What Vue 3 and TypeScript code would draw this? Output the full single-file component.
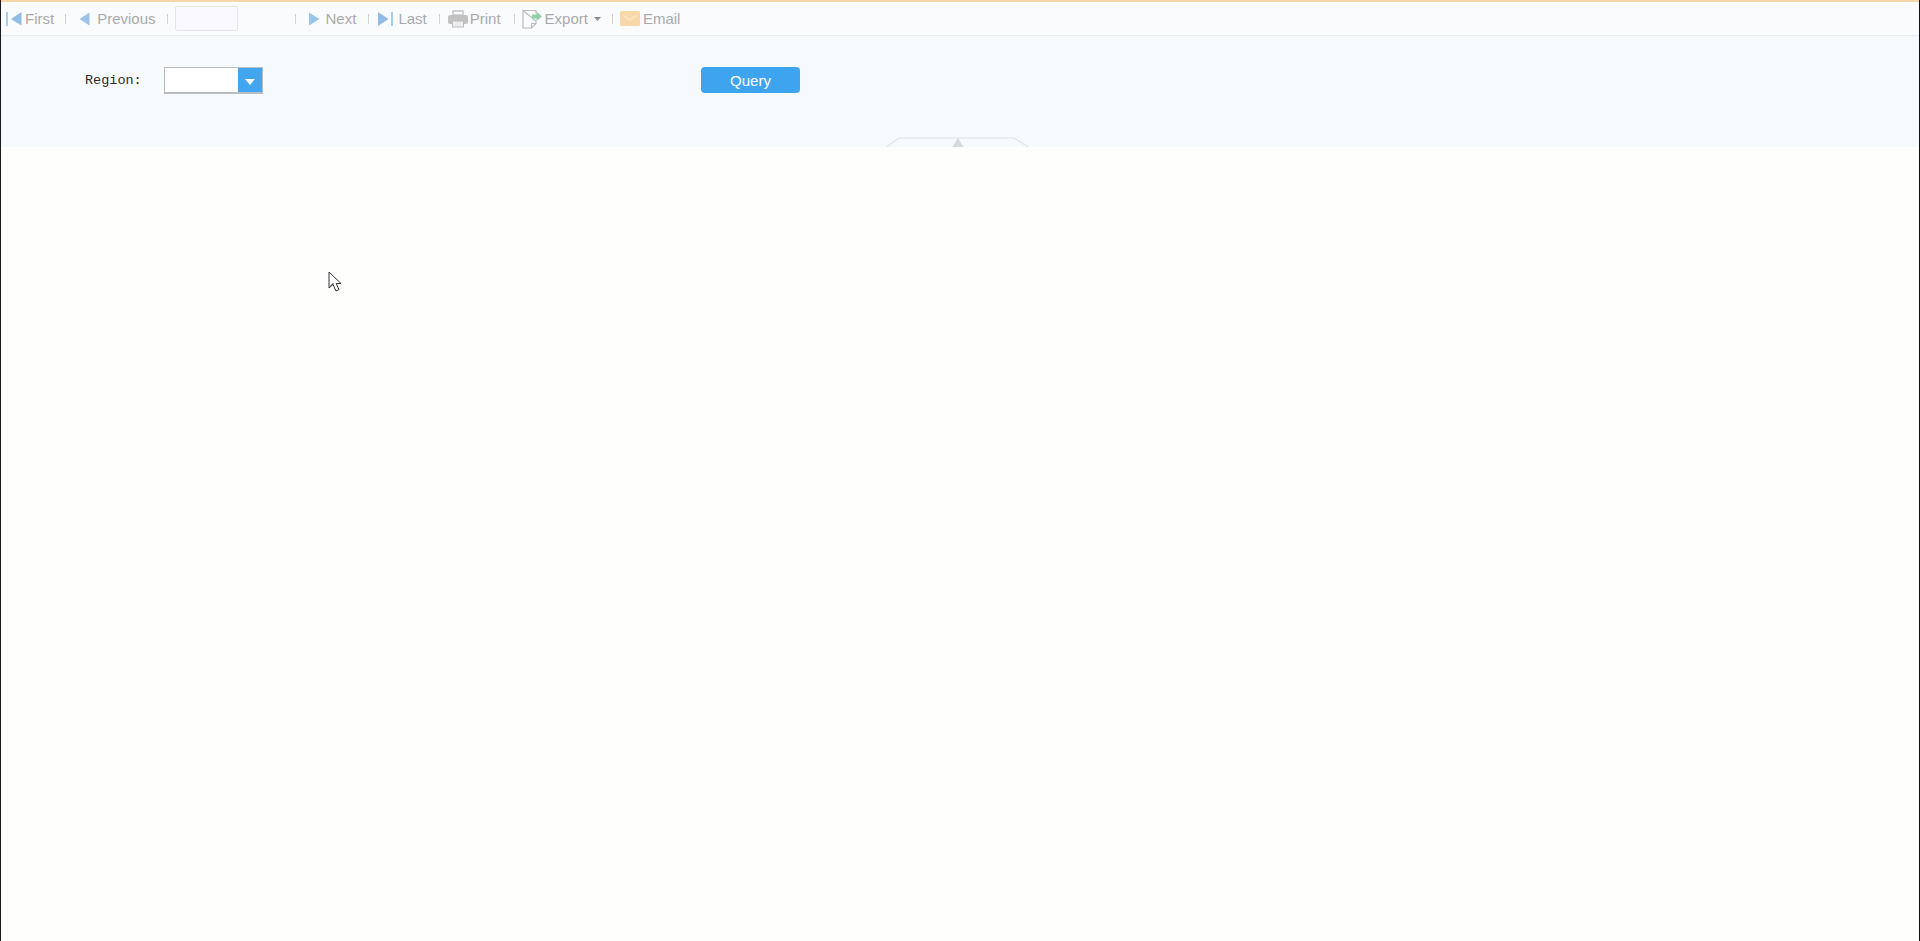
<script setup lang="ts">
const cursorPath = 'M1 1 L1 17 L5 13.5 L8 20 L11 18.6 L8.2 12.5 L13 12.5 Z'
</script>

<template>
  <div class="page">
    <header class="toolbar">
      <button class="tool first">
        <svg width="16" height="16" viewBox="0 0 16 16"><rect x="0" y="1" width="2" height="14" fill="#a9cdec" /><path d="M15.5 1V14.5L5 8Z" fill="#8fbde6" /></svg>
        <span>First</span>
      </button>
      <i class="sep"></i>
      <button class="tool prev">
        <svg width="11" height="16" viewBox="0 0 11 16"><path d="M10.5 1.5V14.5L0.5 8Z" fill="#9cc4e8" /></svg>
        <span>Previous</span>
      </button>
      <i class="sep"></i>
      <input class="page-input" type="text" aria-label="Page" />
      <i class="sep"></i>
      <button class="tool next">
        <svg width="11" height="16" viewBox="0 0 11 16"><path d="M0 1.5V14.5L10.5 8Z" fill="#9cc4e8" /></svg>
        <span>Next</span>
      </button>
      <i class="sep"></i>
      <button class="tool last">
        <svg width="16" height="16" viewBox="0 0 16 16"><path d="M0 1V15L10.5 8Z" fill="#8fbde6" /><rect x="13" y="1" width="2" height="14" fill="#a9cdec" /></svg>
        <span>Last</span>
      </button>
      <i class="sep"></i>
      <button class="tool print">
        <svg width="20" height="18" viewBox="0 0 20 18"><path d="M5 1h10v4H5z" fill="none" stroke="#c4c4c4" stroke-width="1.4" /><rect x="0" y="5" width="20" height="9" rx="2" fill="#c2c2c2" /><rect x="4.5" y="11" width="11" height="6" fill="#eceef0" stroke="#bdbdbd" /></svg>
        <span>Print</span>
      </button>
      <i class="sep"></i>
      <button class="tool export">
        <svg width="20" height="20" viewBox="0 0 20 20"><path d="M1 1.5H14V4.5M14 12V14.5L9.5 19H1V1.5Z" fill="none" stroke="#bcbcbc" stroke-width="1.2" /><path d="M9.5 19V14.5H14" fill="none" stroke="#bcbcbc" stroke-width="1.2" /><path d="M10 5.5H14.5V2.5L20 7.5L14.5 12V9.5H10Z" fill="#8fd0a6" /></svg>
        <span>Export</span>
        <svg class="caret" width="7" height="4" viewBox="0 0 7 4"><path d="M0 0H7L3.5 4Z" fill="#8c8c8c" /></svg>
      </button>
      <i class="sep"></i>
      <button class="tool email">
        <svg width="20" height="15" viewBox="0 0 20 15"><rect width="20" height="15" rx="1.5" fill="#f8d8a8" /><path d="M3 4L10 9L17 4" fill="none" stroke="#fbe6c6" stroke-width="1.2" /></svg>
        <span>Email</span>
      </button>
    </header>

    <section class="panel">
      <div class="form-row">
        <label class="field-label">Region:</label>
        <div class="combo">
          <div class="combo-input"></div>
          <div class="combo-trigger"><span class="combo-arrow"></span></div>
        </div>
        <button class="query">Query</button>
      </div>
      <div class="collapse-row">
        <div class="collapse-handle">
          <svg width="143" height="10" viewBox="0 0 143 10">
            <path d="M0.5 10L13 1H128L142.5 10" fill="none" stroke="#e2e4e8" stroke-width="1.2" />
            <path d="M66.5 10L72 1L77.5 10Z" fill="#d8dade" />
          </svg>
        </div>
      </div>
    </section>

    <main class="content"></main>

    <svg class="cursor" width="15" height="22" viewBox="0 0 15 22">
      <path :d="cursorPath" fill="#fff" stroke="#333" stroke-width="1" stroke-linejoin="round" />
      <path d="M2 3L2 14.5L5 12L6 13L2 15Z" fill="#222" opacity=".75" />
    </svg>
  </div>
</template>

<style>
html, body { margin: 0; background: #fefefe; overflow: hidden; }
</style>

<style scoped>
.page {
  position: relative;
  box-sizing: border-box;
  width: 1920px;
  height: 941px;
  display: flex;
  flex-direction: column;
  background: #fefefd;
  border-left: 1px solid #1a1a1a;
  border-right: 1px solid #111;
  font-family: "Liberation Sans", Arial, sans-serif;
}
.toolbar {
  box-sizing: border-box;
  height: 36px;
  flex: none;
  display: flex;
  align-items: center;
  padding-left: 5px;
  background: #fafbfc;
  border-top: 2px solid #f3d9a8;
  border-bottom: 1px solid #ebedef;
}
.tool {
  display: flex;
  align-items: center;
  gap: 3px;
  padding: 0;
  border: 0;
  background: none;
  font: 15px "Liberation Sans", Arial, sans-serif;
  color: #a8aaad;
  white-space: nowrap;
}
.sep {
  flex: none;
  width: 1px;
  height: 10px;
  margin: 0 11px;
  background: #cfd2d6;
}
.prev { gap: 7px; margin-left: 2px; }
.page-input {
  box-sizing: border-box;
  width: 63px;
  height: 25px;
  margin: 0 46px 0 -4px;
  padding: 0;
  border: 1px solid #e4e6ea;
  border-radius: 2px;
  background: #f8f8fd;
}
.next { gap: 6px; margin: 0 1px 0 2px; }
.last { gap: 4px; margin: 0 1px 0 -2px; }
.print { gap: 2px; margin: 0 2px 0 -3px; }
.export { gap: 3px; margin-left: -4px; }
.caret { margin-left: 3px; }
.email { gap: 3px; margin-left: -4px; }
.panel {
  flex: none;
  height: 111px;
  box-sizing: border-box;
  display: flex;
  flex-direction: column;
  background: #f6fafd;
}
.form-row {
  display: flex;
  align-items: flex-start;
  padding: 31px 0 0 84px;
  height: 27px;
}
.field-label {
  width: 79px;
  align-self: center;
  font: 13.5px "Liberation Mono", monospace;
  color: #2a2a2a;
}
.combo {
  box-sizing: border-box;
  width: 99px;
  height: 27px;
  display: flex;
  background: #fff;
  border: 1px solid #b9bcc2;
  border-bottom-width: 2px;
}
.combo-input { flex: 1; }
.combo-trigger {
  width: 24px;
  display: flex;
  align-items: center;
  justify-content: center;
  background: #42a5f0;
}
.combo-arrow {
  width: 0;
  height: 0;
  border-left: 5px solid transparent;
  border-right: 5px solid transparent;
  border-top: 6px solid #fff;
  margin-top: 3px;
}
.query {
  box-sizing: border-box;
  width: 99px;
  height: 26px;
  margin-left: 438px;
  border: 0;
  border-radius: 4px;
  background: #3fa4f0;
  color: #fff;
  font: 15px "Liberation Sans", Arial, sans-serif;
}
.collapse-row {
  margin-top: auto;
  display: flex;
  justify-content: center;
  padding-right: 5px;
}
.collapse-handle { height: 10px; line-height: 0; }
.content { flex: 1; }
.cursor {
  position: absolute;
  left: 327px;
  top: 271px;
}
</style>
